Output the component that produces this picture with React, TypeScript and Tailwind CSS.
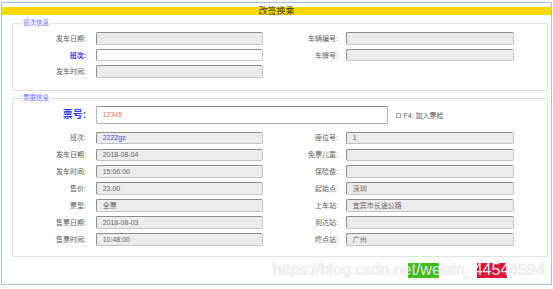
import React from 'react';

type Item = { label: string; value?: string; labelClass?: string; valueClass?: string; white?: boolean };

function Field({ value, white, valueClass, h }: { value?: string; white?: boolean; valueClass?: string; h: string }) {
  return (
    <div
      className={`${h} flex items-center rounded-[2px] border border-[#c4c4c4] border-t-[#8e8e8e] border-l-[#8e8e8e] pl-[5.7px] text-[7px] leading-none ${
        white ? 'bg-white' : 'bg-[#ececec]'
      } ${valueClass || 'text-[#666]'}`}
    >
      {value}
    </div>
  );
}

function Row({ left, right, h }: { left: Item; right?: Item; h: string }) {
  return (
    <div className="flex items-center">
      <div className={`w-[73px] text-right text-[7px] leading-none ${left.labelClass || 'text-[#5a5a5a]'}`}>{left.label}</div>
      <div className="ml-[10px] w-[167px]">
        <Field value={left.value} white={left.white} valueClass={left.valueClass} h={h} />
      </div>
      {right && (
        <>
          <div className="w-[75px] text-right text-[7px] leading-none text-[#5a5a5a]">{right.label}</div>
          <div className="ml-[8px] w-[168px]">
            <Field value={right.value} h={h} />
          </div>
        </>
      )}
    </div>
  );
}

function Legend({ text }: { text: string }) {
  return (
    <div className="-mt-[4.5px] ml-[9px] w-fit bg-white px-[1px] text-[6.5px] leading-[8px] text-[#6a6aff]">{text}</div>
  );
}

const section1: [Item, Item?][] = [
  [{ label: '发车日期:' }, { label: '车辆编号:' }],
  [{ label: '班次:', white: true, labelClass: 'text-[#3535d8] font-bold' }, { label: '车牌号:' }],
  [{ label: '发车时间:' }],
];

const section2: [Item, Item][] = [
  [{ label: '班次:', value: '2222gz', valueClass: 'text-[#4a4ad6]' }, { label: '座位号:', value: '1' }],
  [{ label: '发车日期:', value: '2018-08-04' }, { label: '免票儿童:' }],
  [{ label: '发车时间:', value: '15:06:00' }, { label: '保险费:' }],
  [{ label: '售价:', value: '23.00' }, { label: '起始点:', value: '深圳' }],
  [{ label: '票型:', value: '全票' }, { label: '上车站:', value: '宜宾市长途公路' }],
  [{ label: '售票日期:', value: '2018-08-03' }, { label: '到达站:' }],
  [{ label: '售票时间:', value: '10:48:00' }, { label: '终点站:', value: '广州' }],
];

export default function App() {
  return (
    <div className="h-[289px] w-[553px] overflow-hidden bg-white pl-[1px] pt-[2px] font-['Liberation_Sans','Noto_Sans_CJK_SC',sans-serif]">
      <div className="relative h-[283px] w-[551px] border border-[#a9c1de] pt-[4px]">
        {/* title bar */}
        <div className="h-[8.3px] bg-[#ffd800] text-center text-[9px] leading-[8.3px] text-[#3a3a3a]">改签换乘</div>

        {/* 班次信息 */}
        <div className="ml-[10px] mr-[3px] mt-[7.7px] border border-[#e2e2e2] pb-[12px]">
          <Legend text="班次信息" />
          <div className="flex flex-col gap-[4px] pt-[4.5px]">
            {section1.map(([l, r], i) => (
              <Row key={i} left={l} right={r} h="h-[12.7px]" />
            ))}
          </div>
        </div>

        {/* 票据信息 */}
        <div className="ml-[10px] mr-[3px] mt-[6.6px] border border-[#e2e2e2] pb-[10.2px]">
          <Legend text="票据信息" />
          <div className="flex items-start pt-[3.5px]">
            <div className="flex h-[18.6px] w-[73px] items-center justify-end text-[10px] font-bold leading-none text-[#2c3de6]">
              票号:
            </div>
            <div className="ml-[10px] flex h-[18.6px] w-[292px] items-center rounded-[2px] border border-[#b0b0b0] border-t-[#8e8e8e] bg-white pl-[5.7px] text-[7px] leading-none text-[#e8735e]">
              12345
            </div>
            <div className="ml-[8px] mt-[6px] flex items-center">
              <span className="h-[5px] w-[5px] border border-[#a8a8a8] bg-[#f3f3f3]" />
              <span className="ml-[2.5px] text-[7px] leading-none text-[#555]">F4: 加入票检</span>
            </div>
          </div>
          <div className="mt-[7.4px] flex flex-col gap-[4.43px]">
            {section2.map(([l, r], i) => (
              <Row key={i} left={l} right={r} h="h-[12.5px]" />
            ))}
          </div>
        </div>

        {/* buttons (their captions are hidden under the watermark) */}
        <div className="mt-[5.7px] flex gap-[38px] pl-[406px]">
          <button className="h-[15.6px] w-[30.5px] bg-[#3fbe1c]" aria-label="确定" />
          <button className="h-[15.6px] w-[30.5px] bg-[#d9173b]" aria-label="取消" />
        </div>

        {/* watermark */}
        <div className="pointer-events-none absolute left-[270.7px] top-[259px] whitespace-nowrap font-['Liberation_Sans',sans-serif] text-[16px] leading-[16px] text-[rgba(255,255,255,0.9)] [text-shadow:0_0_1px_rgba(0,0,0,0.3)]">
          https://blog.csdn.net/weixin_44544594
        </div>
      </div>
    </div>
  );
}
